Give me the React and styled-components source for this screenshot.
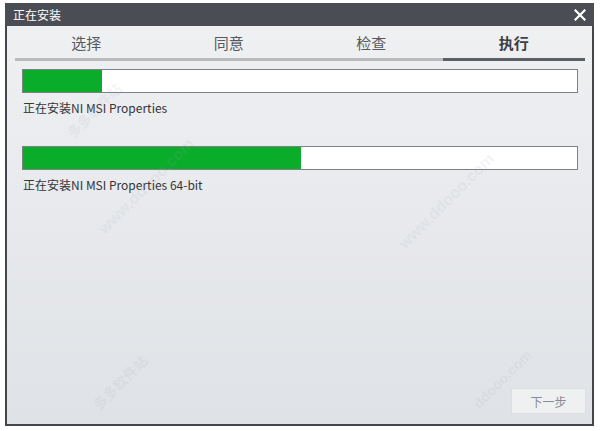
import React from "react";
import styled, { createGlobalStyle } from "styled-components";

const Global = createGlobalStyle`
  html, body { margin: 0; padding: 0; background: #ffffff; }
  body { font-family: "Microsoft YaHei", "Noto Sans CJK SC", "Noto Sans", sans-serif; }
`;

const Page = styled.div`
  width: 600px;
  height: 431px;
  padding: 3px 0 0 5px;
  box-sizing: border-box;
  position: relative;
  overflow: hidden;
`;

const Window = styled.div`
  width: 589px;
  height: 423px;
  display: flex;
  flex-direction: column;
  box-sizing: border-box;
`;

const TitleBar = styled.div`
  height: 23px;
  background: #4a4e54;
  display: flex;
  align-items: center;
  justify-content: space-between;
  padding: 0 8px 0 8px;
  color: #ffffff;
  font-size: 12px;
  flex-shrink: 0;
`;

const Title = styled.span`
  line-height: 1;
  margin-top: 1px;
`;

const Close = styled.span`
  display: flex;
  align-items: center;
`;

const Body = styled.div`
  flex: 1;
  border: 2px solid #43474d;
  border-top: none;
  background: linear-gradient(#eff0f2, #dfe2e6);
  display: flex;
  flex-direction: column;
  padding: 0 6px 10px 8px;
  box-sizing: border-box;
`;

const Tabs = styled.div`
  display: grid;
  grid-template-columns: repeat(4, 1fr);
  width: 570px;
`;

const Tab = styled.div`
  height: 35px;
  display: flex;
  align-items: center;
  justify-content: center;
  box-sizing: border-box;
  font-size: 15px;
  color: ${(p) => (p.$active ? "#3c3f44" : "#555a60")};
  font-weight: ${(p) => (p.$active ? 700 : 400)};
  border-bottom: 3px solid ${(p) => (p.$active ? "#5a5f66" : "#b8babc")};
`;

const Section = styled.div`
  display: flex;
  flex-direction: column;
  padding-left: 7px;
  margin-top: ${(p) => p.$top}px;
`;

const Bar = styled.div`
  width: 556px;
  height: 24px;
  box-sizing: border-box;
  border: 1px solid #7d8085;
  background: #ffffff;
  display: flex;
`;

const Fill = styled.div`
  height: 100%;
  background: #0aad2a;
`;

const Label = styled.div`
  margin-top: 8px;
  font-size: 12px;
  color: #333538;
  line-height: 14px;
  padding-left: 1px;
`;

const Spacer = styled.div`
  flex: 1;
`;

const Footer = styled.div`
  display: flex;
  justify-content: flex-end;
`;

const Button = styled.button`
  width: 75px;
  height: 26px;
  border: 1px solid #dcdee0;
  background: #eff0f1;
  color: #8a8d90;
  font-family: inherit;
  font-size: 12px;
  padding: 0;
`;

const Watermark = styled.div`
  position: absolute;
  left: ${(p) => p.$x}px;
  top: ${(p) => p.$y}px;
  transform: rotate(-45deg);
  transform-origin: left top;
  font-size: ${(p) => p.$size}px;
  color: rgba(160, 170, 185, 0.14);
  font-family: "Liberation Sans", "Noto Sans CJK SC", sans-serif;
  white-space: nowrap;
  pointer-events: none;
  font-weight: 700;
`;

export default function App() {
  const tabs = ["选择", "同意", "检查", "执行"];
  return (
    <Page>
      <Global />
      <Window>
        <TitleBar>
          <Title>正在安装</Title>
          <Close>
            <svg width="12" height="12" viewBox="0 0 12 12">
              <path d="M1.5 1.5 L10.5 10.5 M10.5 1.5 L1.5 10.5" stroke="#ffffff" strokeWidth="2.2" strokeLinecap="square" />
            </svg>
          </Close>
        </TitleBar>
        <Body>
          <Tabs>
            {tabs.map((t, i) => (
              <Tab key={t} $active={i === 3}>{t}</Tab>
            ))}
          </Tabs>
          <Section $top={8}>
            <Bar><Fill style={{ width: "79px" }} /></Bar>
            <Label>正在安装NI MSI Properties</Label>
          </Section>
          <Section $top={31}>
            <Bar><Fill style={{ width: "278px" }} /></Bar>
            <Label>正在安装NI MSI Properties 64-bit</Label>
          </Section>
          <Spacer />
          <Footer>
            <Button>下一步</Button>
          </Footer>
        </Body>
      </Window>
      <Watermark $x={62} $y={128} $size={14}>多多软件站</Watermark>
      <Watermark $x={95} $y={225} $size={16}>www.ddooo.com</Watermark>
      <Watermark $x={395} $y={240} $size={16}>www.ddooo.com</Watermark>
      <Watermark $x={88} $y={400} $size={14}>多多软件站</Watermark>
      <Watermark $x={470} $y={400} $size={14}>ddooo.com</Watermark>
    </Page>
  );
}
